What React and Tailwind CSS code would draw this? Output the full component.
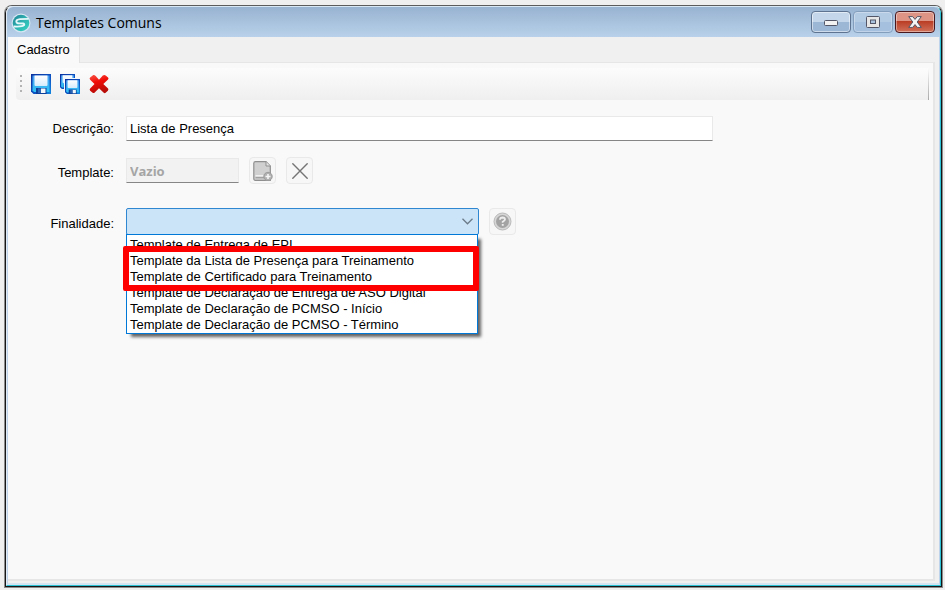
import { useState } from 'react';

const FINALIDADES = [
  'Template de Entrega de EPI',
  'Template da Lista de Presença para Treinamento',
  'Template de Certificado para Treinamento',
  'Template de Declaração de Entrega de ASO Digital',
  'Template de Declaração de PCMSO - Início',
  'Template de Declaração de PCMSO - Término'
];

function AppLogo() {
  return (
    <svg width="20" height="20" viewBox="0 0 20 20" aria-hidden="true">
      <defs>
        <linearGradient id="logo" x1="0" y1="0" x2="1" y2="1">
          <stop offset="0" stopColor="#1f7f90" />
          <stop offset="0.5" stopColor="#2fb3b3" />
          <stop offset="1" stopColor="#35d3c0" />
        </linearGradient>
      </defs>
      <circle cx="10" cy="10" r="9.5" fill="#d5e6f2" />
      <circle cx="10" cy="10" r="8.3" fill="url(#logo)" />
      <path
        d="M17.5 5.8 9 6.2Q5.2 6.6 5.3 8.6q.2 1.7 3 1.8l3.6.1q2 .3 1.200 1.700Q11.500 14 2.600 13.500"
        fill="none"
        stroke="#e6f8fa"
        strokeWidth="1.8"
      />
    </svg>
  );
}

function Floppy({ x = 0, y = 0, size = 20 }) {
  return (
    <svg x={x} y={y} width={size} height={size} viewBox="0 0 20 20" aria-hidden="true">
      <defs>
        <linearGradient id="disk" x1="0" y1="0" x2="1" y2="1">
          <stop offset="0" stopColor="#0b2f9c" />
          <stop offset="0.6" stopColor="#0d55c4" />
          <stop offset="1" stopColor="#1388e0" />
        </linearGradient>
        <linearGradient id="label" x1="0" y1="0" x2="0" y2="1">
          <stop offset="0" stopColor="#ffffff" />
          <stop offset="1" stopColor="#d6ecfb" />
        </linearGradient>
        <linearGradient id="body" x1="0" y1="0" x2="0" y2="1">
          <stop offset="0" stopColor="#4b9df2" />
          <stop offset="1" stopColor="#2fc4f5" />
        </linearGradient>
      </defs>
      <path d="M0 0h20v20H2.500L0 17.500z" fill="url(#disk)" />
      <path d="M1.500 1.500h17v16.500H3L1.500 16.500z" fill="url(#body)" />
      <path d="M3.500 1.500h13v9.500q0 1-1 1h-11q-1 0-1-1z" fill="url(#label)" />
      <path d="M5 14h10.500v6H5z" fill="#0b3f9a" />
      <path d="M10 14.500h4.500V19H10z" fill="#f2f7fa" />
      <path d="M7 14.500h3V19H7z" fill="#2a66b5" />
    </svg>
  );
}

function SaveAllIcon() {
  return (
    <svg width="20" height="20" viewBox="0 0 20 20" aria-hidden="true">
      <Floppy size={15} />
      <path d="M4 4h16v16H4z" fill="#f4f9fd" />
      <Floppy x={5} y={5} size={15} />
    </svg>
  );
}

function DeleteIcon() {
  return (
    <svg width="20" height="20" viewBox="0 0 21 20" aria-hidden="true">
      <defs>
        <linearGradient id="del" x1="0" y1="0" x2="0.3" y2="1">
          <stop offset="0" stopColor="#f8584a" />
          <stop offset="0.45" stopColor="#f10d08" />
          <stop offset="1" stopColor="#b80d08" />
        </linearGradient>
      </defs>
      <path
        d="M4.500.500Q6 .300 7 1.500L10.500 5.500 14.500 1.200Q16 0 17.500 1L20 3.200Q21 4.300 20 5.300L15 10 20 14.800Q20.800 16 19.800 17L17.500 19.300Q16.300 20 15.200 19L10.500 14.500 6 19Q5 20 3.800 19.200L1.200 17Q.200 16 1.200 14.800L5.800 10 1.200 5.500Q0 4.500 1.200 3.300z"
        fill="url(#del)"
      />
    </svg>
  );
}

function AddPageIcon() {
  return (
    <svg width="20" height="20" viewBox="0 0 20 20" fill="none" stroke="#8f8f8f" aria-hidden="true">
      <path d="M2.500.700h10.500L17.300 5v14.300h-15Q.800 19.300.800 17.500V2.200Q.800.700 2.500.700z" fill="#d0d0d0" strokeWidth="1.2" />
      <path d="M13 .700V5h4.300" fill="#e4e4e4" />
      <path d="M2.500 14.700h9" stroke="#f0f0f0" strokeWidth="1.4" />
      <path d="M2.500 16.700h9" stroke="#9c9c9c" strokeWidth="1.2" />
      <circle cx="15" cy="15.500" r="4.200" fill="#b0b0b0" stroke="#9a9a9a" />
      <path d="M15 13v5M12.500 15.500h5" stroke="#f5f5f5" strokeWidth="1.6" />
    </svg>
  );
}

function RemoveIcon() {
  return (
    <svg width="16" height="16" viewBox="0 0 16 16" fill="none" stroke="#757575" strokeWidth="1.4" aria-hidden="true">
      <path d="M.800.800l14.400 14.400M15.200.800.800 15.200" strokeLinecap="round" />
    </svg>
  );
}

function HelpIcon() {
  return (
    <svg width="19" height="19" viewBox="0 0 19 19" fill="none" aria-hidden="true">
      <circle cx="9.500" cy="9.500" r="8.500" fill="#d6d6d6" stroke="#b9b9b9" />
      <circle cx="9.500" cy="9.500" r="6.500" fill="#a3a3a3" />
      <path d="M7 7.800Q7 5.500 9.600 5.500 12 5.600 12 7.500 12 8.600 9.700 9.700v1" stroke="#ededed" strokeWidth="1.8" />
      <path d="M8.800 12h1.900v1.800H8.800z" fill="#ededed" />
    </svg>
  );
}

function CaptionButtons() {
  return (
    <div className="flex gap-0.5">
      <button
        aria-label="Minimizar"
        className="flex h-[22px] w-10 items-center justify-center rounded-sm border border-[#5d738f] bg-linear-to-b from-[#c3d6ea] from-50% to-[#9bb7d5] to-50% pt-0.5 inset-ring inset-ring-white/50"
      >
        <svg width="14" height="6" viewBox="0 0 14 6">
          <rect x="0.5" y="0.5" width="13" height="5" rx="1" fill="#f2f2f2" stroke="#535666" />
        </svg>
      </button>
      <button
        aria-label="Maximizar"
        className="flex h-[22px] w-10 items-center justify-center rounded-sm border border-[#839ebd] bg-linear-to-b from-[#b4cbe4] from-50% to-[#a5c0df] to-50% inset-ring inset-ring-white/30"
      >
        <svg width="14" height="12" viewBox="0 0 14 12">
          <rect x="0.5" y="0.5" width="13" height="11" rx="1" fill="#e6e6e6" stroke="#535666" />
          <rect x="4.5" y="4" width="5" height="3.5" fill="#a9c2de" stroke="#535666" />
        </svg>
      </button>
      <button
        aria-label="Fechar"
        className="flex h-[22px] w-10 items-center justify-center rounded-sm border border-[#49181f] bg-linear-to-b from-[#dd9484] from-45% via-[#b93b22] via-45% to-[#d0705a] inset-ring inset-ring-white/40"
      >
        <svg width="14" height="12" viewBox="0 0 14 12">
          <path
            d="M.700.600h4L7 3.400 9.300.600h4L9.200 6l4.100 5.400h-4L7 8.600 4.700 11.400h-4L4.800 6z"
            fill="#f4f4f4"
            stroke="#535666"
          />
        </svg>
      </button>
    </div>
  );
}

function SmallButton({ label, children }) {
  return (
    <button
      aria-label={label}
      className="flex size-[27px] shrink-0 items-center justify-center rounded border border-[#e9e9e9] bg-[#f7f7f7]"
    >
      {children}
    </button>
  );
}

export default function App() {
  const [descricao, setDescricao] = useState('Lista de Presença');

  return (
    <div className="flex min-h-screen flex-col bg-[#efefef] pt-[5px] pr-0.5 pb-0.5 pl-1 font-['Liberation_Sans',sans-serif] text-[13px] text-black">
      <div className="flex flex-1 rounded-t-lg border border-[#8b8b8b] border-t-[#5c5c5c]">
        <div className="flex flex-1 rounded-t-[7px] border border-[#161616] border-t-[#d9e8f5] bg-[#f0f0f0]">
          <main className="flex min-w-0 flex-1 flex-col rounded-t-md border border-t-0 border-r-[#2cc2d6] border-b-[#2cc2d6] border-l-[#dfeaf5]">
            <header className="flex h-[30px] shrink-0 items-start justify-between rounded-t-md bg-linear-to-b from-[#98b3d1] to-[#b9d1ea] pt-1 pr-[5px] pl-1">
              <div className="flex items-center gap-[5px]">
                <AppLogo />
                <h1 className="font-['Open_Sans',sans-serif] text-[14px] leading-6">Templates Comuns</h1>
              </div>
              <CaptionButtons />
            </header>

            <div className="flex flex-1 flex-col border-x border-b-2 border-x-[#bfd3ea] border-b-[#d4e4f0] pr-1 pb-0.5">
              <div role="tablist" className="flex h-[25px] shrink-0">
                <button
                  role="tab"
                  aria-selected="true"
                  className="relative z-10 -mb-px border-r border-[#e2e2e2] bg-[#f9f9f9] px-[9px]"
                >
                  Cadastro
                </button>
              </div>

              <section className="flex-1 border-t border-r-2 border-b-2 border-[#e6e6e6] bg-[#f9f9f9]">
                <div
                  role="toolbar"
                  className="mt-[5px] mr-1 ml-2 flex h-8 items-center gap-[9px] rounded-l bg-linear-to-b from-[#fcfcfc] to-[#efefef] pl-1"
                >
                  <svg width="2" height="18" viewBox="0 0 2 18" fill="#b3b3b3" aria-hidden="true">
                    <path d="M0 0h2v2H0zM0 5h2v2H0zM0 10h2v2H0zM0 15h2v2H0z" />
                  </svg>
                  <button aria-label="Salvar">
                    <Floppy />
                  </button>
                  <button aria-label="Salvar e novo">
                    <SaveAllIcon />
                  </button>
                  <button aria-label="Excluir">
                    <DeleteIcon />
                  </button>
                  <div className="ml-auto h-full w-px bg-linear-to-b from-[#fcfcfc] to-[#a8a8a8]" />
                </div>

                <form className="grid grid-cols-[106px_1fr] gap-x-3 pt-4" onSubmit={(e) => e.preventDefault()}>
                  <label htmlFor="descricao" className="self-center text-right">
                    Descrição:
                  </label>
                  <div className="pr-[220px]">
                    <input
                      id="descricao"
                      type="text"
                      value={descricao}
                      onChange={(e) => setDescricao(e.target.value)}
                      className="block h-[25px] w-full border border-[#e9e9e9] border-b-[#868686] bg-white px-[3px] outline-none"
                    />
                  </div>

                  <label htmlFor="template" className="mt-4 self-center pt-1 text-right">
                    Template:
                  </label>
                  <div className="mt-4 flex items-center gap-2.5">
                    <input
                      id="template"
                      type="text"
                      value="Vazio"
                      disabled
                      className="h-[25px] w-[113px] border border-[#e9e9e9] border-b-[#868686] bg-[#f2f2f2] px-[3px] font-['Open_Sans',sans-serif] font-bold text-[#a5a5a5]"
                    />
                    <SmallButton label="Adicionar template">
                      <AddPageIcon />
                    </SmallButton>
                    <SmallButton label="Remover template">
                      <RemoveIcon />
                    </SmallButton>
                  </div>

                  <label htmlFor="finalidade" className="mt-6 self-center pt-1 text-right">
                    Finalidade:
                  </label>
                  <div className="mt-6 flex items-center gap-2.5">
                    <div className="relative w-[353px]">
                      <select
                        id="finalidade"
                        defaultValue=""
                        className="block h-[27px] w-full appearance-none rounded-xs border border-[#2f86d1] bg-[#cce4f7] px-[3px] outline-none"
                      >
                        <option value="" />
                        {FINALIDADES.map((item) => (
                          <option key={item}>{item}</option>
                        ))}
                      </select>
                      <svg
                        className="pointer-events-none absolute top-2.5 right-1.5"
                        width="11"
                        height="7"
                        viewBox="0 0 11 7"
                        fill="none"
                        stroke="#6b7b89"
                        strokeWidth="1.3"
                      >
                        <path d="M.500.800l5 5 5-5" />
                      </svg>

                      {/* Open list */}
                      <ul
                        role="listbox"
                        className="absolute top-full left-0 -mt-px w-[352px] border border-[#0078d7] bg-white pt-0.5 leading-4 shadow-[4px_4px_3px_-1px_rgba(0,0,0,0.6)]"
                      >
                        {FINALIDADES.map((item) => (
                          <li key={item} role="option" aria-selected="false" className="truncate px-[3px]">
                            {item}
                          </li>
                        ))}
                      </ul>
                      {/* Highlight around the training templates */}
                      <div className="pointer-events-none absolute top-[38px] right-0 -left-[3px] h-[45px] rounded-xs border-6 border-[#fe0000]" />
                    </div>
                    <SmallButton label="Ajuda">
                      <HelpIcon />
                    </SmallButton>
                  </div>
                </form>
              </section>
            </div>
          </main>
        </div>
      </div>
    </div>
  );
}
